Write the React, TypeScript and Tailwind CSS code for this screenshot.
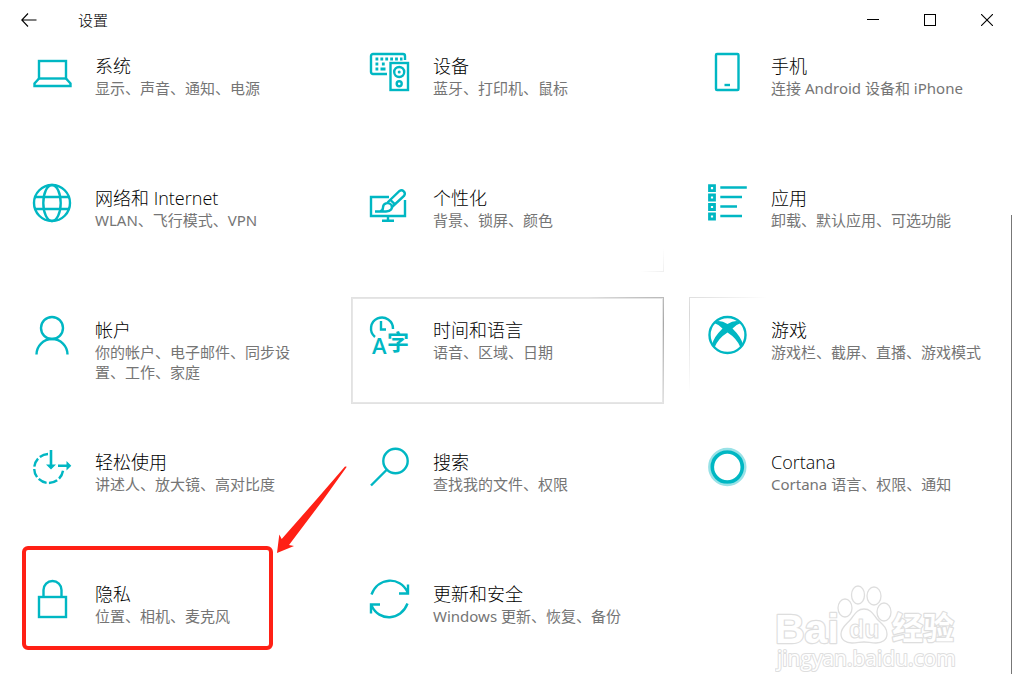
import type { ReactNode } from 'react'

interface Category {
  title: string
  description: string
  icon: ReactNode
  frame?: string
  edge?: string
  highlighted?: boolean
}

const teal = '#00b7c3'

const categories: Category[] = [
  {
    title: '系统',
    description: '显示、声音、通知、电源',
    icon: (
      <>
        <rect x="7" y="9" width="27" height="17.5" />
        <path d="M7 26.5 2.5 31.5V34h36v-2.5L34 26.5" />
      </>
    ),
  },
  {
    title: '设备',
    description: '蓝牙、打印机、鼠标',
    icon: (
      <>
        <path d="M17 22H3a2 2 0 0 1-2-2V4a2 2 0 0 1 2-2h30a2 2 0 0 1 2 2v4" />
        <path d="M5.5 7h27" strokeWidth="2.8" strokeDasharray="2.8 2.1" />
        <path d="M5.5 12h9.5" strokeWidth="2.8" strokeDasharray="2.8 3.6" />
        <path d="M5.5 17h2.8M10.5 17h5" strokeWidth="2.8" />
        <rect x="20.5" y="11" width="17.5" height="27" />
        <circle cx="29.2" cy="20" r="5" />
        <circle cx="29.2" cy="20" r="1.5" fill={teal} stroke="none" />
        <circle cx="29.2" cy="31.7" r="2.5" />
      </>
    ),
  },
  {
    title: '手机',
    description: '连接 Android 设备和 iPhone',
    icon: (
      <>
        <rect x="8" y="2" width="22.5" height="36" rx="1" />
        <path d="M16.5 33h5.5" />
      </>
    ),
  },
  {
    title: '网络和 Internet',
    description: 'WLAN、飞行模式、VPN',
    icon: (
      <>
        <circle cx="20" cy="19" r="18" />
        <ellipse cx="20" cy="19" rx="8.7" ry="18" />
        <path d="M3 13h34M3 25h34" />
      </>
    ),
  },
  {
    title: '个性化',
    description: '背景、锁屏、颜色',
    frame: 'bg-[radial-gradient(circle_at_100%_100%,#efefef,#fff_24px)]',
    icon: (
      <>
        <path d="M19 13H1v19h34V16M18 32v4M12 36.8h12" />
        <path d="m17.5 18.5 12-11.5a3.4 3.4 0 0 1 4.7 4.7L22 23" />
        <path d="m20.5 16 4.2 4.2" />
        <path d="M5 27.5h11c5 0 6.8-3 5.5-6.5-3.5-3.5-8.5-1.5-8.5 2.5 0 2-1 3.5-3 4" />
      </>
    ),
  },
  {
    title: '应用',
    description: '卸载、默认应用、可选功能',
    icon: (
      <>
        <path d="M1.5 1.7h5v5h-5zM1.5 11h5v5h-5zM1.5 20.5h5v5h-5zM1.5 30h5v5h-5z" strokeWidth="2.8" />
        <path d="M12.3 3.5h26.5M12.3 13H34M12.3 22.5H29M12.3 32H34" />
      </>
    ),
  },
  {
    title: '帐户',
    description: '你的帐户、电子邮件、同步设置、工作、家庭',
    icon: (
      <>
        <circle cx="20" cy="12" r="11" />
        <path d="M4.5 38.5a15.5 15.5 0 0 1 31 0" />
      </>
    ),
  },
  {
    title: '时间和语言',
    description: '语音、区域、日期',
    frame: 'bg-[radial-gradient(circle_at_100%_25%,#a8a8a8,#e2e2e2_80px)]',
    edge: 'border-[#e6e6e6]',
    icon: (
      <>
        <path d="M5 21A11 11 0 1 1 23 13" />
        <path d="M11 5v8.5h5" />
        <text x="2" y="38" fontSize="22" fontWeight="600" fill={teal} stroke="none">
          A
        </text>
        <text x="17" y="34" fontSize="22" fontWeight="700" fill={teal} stroke="none">
          字
        </text>
      </>
    ),
  },
  {
    title: '游戏',
    description: '游戏栏、截屏、直播、游戏模式',
    frame: 'bg-[radial-gradient(circle_at_0_15%,#d8d8d8,#fff_80px)]',
    icon: (
      <>
        <circle cx="19.5" cy="19" r="18" />
        <path
          d="M7.5 5.5Q13 4 19.5 8 26 4 31.5 5.5L33 7Q28 8.5 24.5 12.5 34 22 34.5 28L32.5 31.5Q29 22.5 19.5 16.5 10 22.5 6.5 31.5L4.5 28Q5 22 14.5 12.5 11 8.5 6 7Z"
          fill={teal}
          stroke="none"
        />
      </>
    ),
  },
  {
    title: '轻松使用',
    description: '讲述人、放大镜、高对比度',
    icon: (
      <>
        <path d="M16 6A14.5 14.5 0 1 0 31.2 20.5" strokeDasharray="8.8 2.4" />
        <path d="M19 2v16M26 17.7h10" strokeWidth="2.6" />
        <path d="M14 16.5h10L19 21.5ZM34.5 13v9.5l4.8-4.8Z" fill={teal} stroke="none" />
      </>
    ),
  },
  {
    title: '搜索',
    description: '查找我的文件、权限',
    icon: (
      <>
        <circle cx="25.5" cy="13" r="12.2" />
        <path d="M17 21.5 1 37.5" />
      </>
    ),
  },
  {
    title: 'Cortana',
    description: 'Cortana 语言、权限、通知',
    icon: (
      <>
        <circle cx="19.3" cy="19" r="17.8" stroke="#99e2e7" strokeWidth="2.8" />
        <circle cx="19.3" cy="19" r="15" strokeWidth="3.6" />
      </>
    ),
  },
  {
    title: '隐私',
    description: '位置、相机、麦克风',
    highlighted: true,
    icon: (
      <>
        <rect x="7" y="17" width="27" height="20" />
        <path d="M11.5 17v-7a9 9 0 0 1 18 0v7" />
      </>
    ),
  },
  {
    title: '更新和安全',
    description: 'Windows 更新、恢复、备份',
    icon: (
      <>
        <path d="M1.5 14.5C8-3 30-4 37.5 12M38 4.5v9h-9" />
        <path d="M37.5 23.5C31 41 9 42 1.5 25.5M1 33.5v-9h9" />
      </>
    ),
  },
]

function CategoryTile({ category }: { category: Category }) {
  const { title, description, icon, frame = 'bg-white', edge = 'border-white', highlighted } = category
  return (
    <a href="#" className={`relative flex min-h-[107px] p-px ${frame}`}>
      <div className={`flex flex-1 gap-[23px] border bg-white pt-[17px] pr-2 pl-[17px] ${edge}`}>
        <svg
          width="40"
          height="40"
          viewBox="0 0 40 40"
          fill="none"
          stroke={teal}
          strokeWidth="2.4"
          className="shrink-0 overflow-visible"
          aria-hidden="true"
        >
          {icon}
        </svg>
        <div className="max-w-[210px] flex-1 pt-0.5">
          <h2 className="text-[18px] leading-6 text-black">{title}</h2>
          <p className="font-['Noto_Sans','Noto_Sans_CJK_SC',sans-serif] text-[15px] leading-5 font-normal text-[#757575]">
            {description}
          </p>
        </div>
      </div>
      {highlighted && <Highlight />}
    </a>
  )
}

function Highlight() {
  return (
    <>
      <span className="absolute -top-[15px] left-[9px] h-[104px] w-[251px] rounded-md border-4 border-[#ff2015]" />
      <svg
        width="72"
        height="90"
        viewBox="0 0 72 90"
        className="absolute -top-[96px] left-[263px]"
        aria-hidden="true"
      >
        <path d="M1 88 3.3 69.5 5.7 74 40 35 69 1.5 70.8 1.8 47 35 13 80 18 81Z" fill="#ff2015" />
      </svg>
    </>
  )
}

function Watermark() {
  return (
    <svg
      width="184"
      height="92"
      viewBox="0 0 184 92"
      fill="#fff"
      stroke="#dedede"
      strokeWidth="1.3"
      strokeLinejoin="round"
      className="pointer-events-none absolute right-[53px] bottom-[18px]"
    >
      <g fontWeight="700" paintOrder="stroke" strokeWidth="2.4">
        <text x="0" y="59" fontSize="41" fontFamily="Liberation Sans">
          Bai
        </text>
        <text x="117" y="55" fontSize="31">
          经验
        </text>
      </g>
      <ellipse cx="70" cy="24" rx="7" ry="9" />
      <ellipse cx="83" cy="11" rx="6.5" ry="9" />
      <ellipse cx="99" cy="12" rx="7" ry="9" />
      <ellipse cx="109" cy="28" rx="7" ry="9" />
      <path d="M89 25c7 0 9 5 13 10 5 5 10 8 10 15 0 6-5 9-11 9-5 0-8-1-12-1s-7 1-12 1c-6 0-11-3-11-9 0-7 6-10 10-15 4-5 6-10 13-10Z" />
      <text x="74" y="54" fontSize="25" fontWeight="700" fontFamily="Liberation Sans" strokeWidth="1">
        du
      </text>
      <text x="2" y="82" fontSize="21" fontWeight="400" fontFamily="Open Sans" paintOrder="stroke" strokeWidth="2">
        jingyan.baidu.com
      </text>
    </svg>
  )
}

export default function App() {
  return (
    <div className="relative min-h-screen bg-white font-['Open_Sans','Noto_Sans_CJK_SC',sans-serif] font-light">
      <header className="flex h-[33px] items-center pt-1.5">
        <button aria-label="返回" className="flex h-6 w-[58px] items-center justify-center">
          <svg width="16" height="14" viewBox="0 0 16 14" fill="none" stroke="#000" strokeWidth="1.1">
            <path d="M7 .5.8 7 7 13.5M.8 7H15.5" />
          </svg>
        </button>
        <h1 className="ml-5 flex-1 text-[15px] leading-6 text-black">设置</h1>
        <div className="flex gap-[7px]">
          <button aria-label="最小化" className="flex h-6 w-[50px] items-center justify-center">
            <span className="h-px w-3 bg-black" />
          </button>
          <button aria-label="最大化" className="flex h-6 w-[50px] items-center justify-center">
            <span className="h-3 w-3 border border-black" />
          </button>
          <button aria-label="关闭" className="flex h-6 w-[50px] items-center justify-center">
            <svg width="12" height="12" viewBox="0 0 12 12" stroke="#000" strokeWidth="1.1">
              <path d="m0 0 12 12M12 0 0 12" />
            </svg>
          </button>
        </div>
      </header>

      <main className="grid grid-cols-3 gap-[25px] pr-[10px] pl-[13px]">
        {categories.map((category) => (
          <CategoryTile key={category.title} category={category} />
        ))}
      </main>

      {/* Scrollbar thumb */}
      <div className="absolute top-[215px] right-0 bottom-5 w-px bg-[#777]" />
      <Watermark />
    </div>
  )
}
